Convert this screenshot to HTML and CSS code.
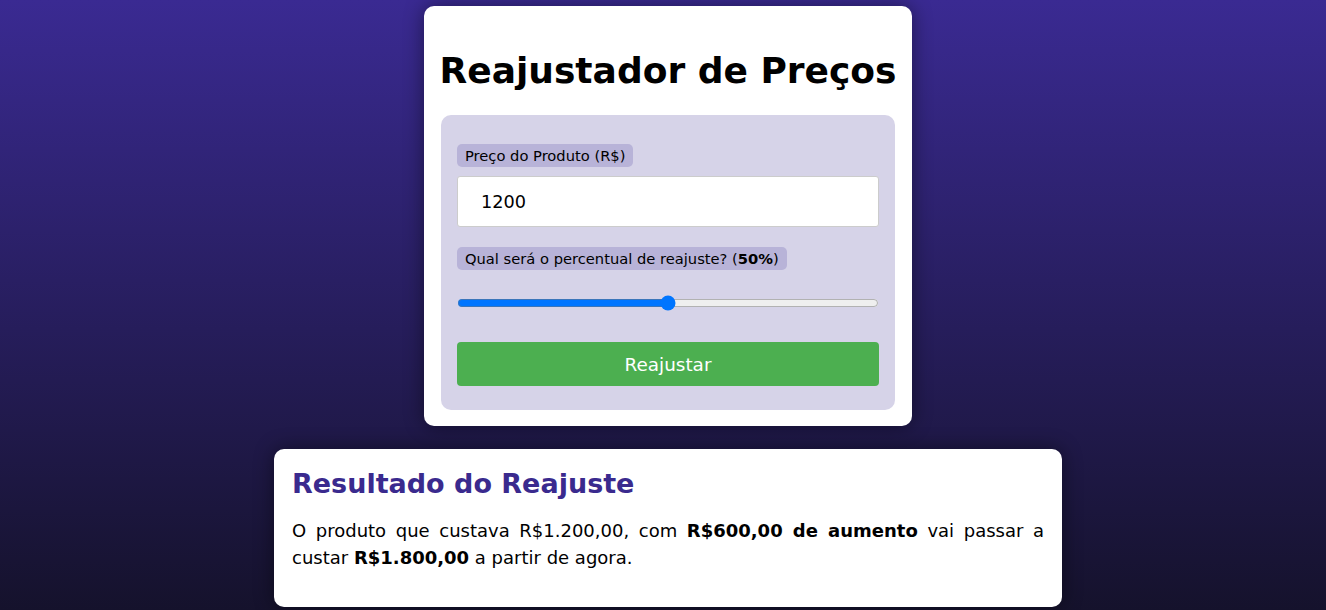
FILE: index.html
```html
<!DOCTYPE html>
<html lang="pt-BR">
<head>
<meta charset="utf-8">
<title>Reajustador de Preços</title>
<link rel="stylesheet" href="styles.css">
</head>
<body>
<main class="page">
  <section class="card">
    <h1 class="title">Reajustador de Preços</h1>
    <form class="panel">
      <label class="tag" for="preco">Preço do Produto (R$)</label>
      <input class="field" id="preco" type="text" value="1200">
      <label class="tag tag-second" for="perc">Qual será o percentual de reajuste? (<b>50%</b>)</label>
      <input class="range" id="perc" type="range" min="0" max="100" value="50">
      <button class="btn" type="button">Reajustar</button>
    </form>
  </section>
  <section class="result">
    <h2 class="result-title">Resultado do Reajuste</h2>
    <p class="result-text">O produto que custava R$1.200,00, com <strong>R$600,00 de aumento</strong> vai passar a custar <strong>R$1.800,00</strong> a partir de agora.</p>
  </section>
</main>
</body>
</html>
```

FILE: styles.css
```css
html, body {
  margin: 0;
  height: 100%;
}
body {
  font-family: "DejaVu Sans", Verdana, sans-serif;
  background: linear-gradient(to bottom, #3a2a92 0%, #15122c 100%);
  color: #000;
  overflow: hidden;
}
.page {
  display: flex;
  flex-direction: column;
  align-items: center;
  padding: 6px 0 0 10px;
  gap: 23px;
}
.card {
  width: 488px;
  box-sizing: border-box;
  background: #fff;
  border-radius: 10px;
  padding: 20px 17px 16px;
  box-shadow: 0 0 20px rgba(0, 0, 0, 0.45);
}
.title {
  margin: 24px -4px 23px;
  font-size: 36px;
  line-height: 42px;
  font-weight: bold;
  text-align: center;
  white-space: nowrap;
}
.panel {
  background: #d6d3e8;
  border-radius: 10px;
  padding: 29px 16px 24px;
  display: flex;
  flex-direction: column;
  align-items: flex-start;
}
.tag {
  background: #b8b3d8;
  border-radius: 5px;
  padding: 3px 8px;
  font-size: 14.7px;
  line-height: 17px;
}
.tag b {
  font-weight: bold;
}
.tag-second {
  margin-top: 20px;
}
.field {
  margin-top: 9px;
  align-self: stretch;
  box-sizing: border-box;
  height: 51px;
  border: 1px solid #ccc;
  border-radius: 3px;
  padding: 0 23px;
  font-family: "DejaVu Sans", Verdana, sans-serif;
  font-size: 17.7px;
  color: #000;
  background: #fff;
  outline: none;
}
.range {
  align-self: stretch;
  margin: 25px 0 0;
  height: 16px;
}
.btn {
  margin-top: 31px;
  align-self: stretch;
  height: 44px;
  border: none;
  border-radius: 4px;
  background: #4caf50;
  color: #fff;
  font-family: "DejaVu Sans", Verdana, sans-serif;
  font-size: 18.4px;
}
.result {
  width: 788px;
  box-sizing: border-box;
  background: #fff;
  border-radius: 10px;
  padding: 18px 18px 19px;
  box-shadow: 0 0 20px rgba(0, 0, 0, 0.45);
}
.result-title {
  margin: 0;
  font-size: 27px;
  line-height: 33px;
  font-weight: bold;
  color: #3a2a8e;
}
.result-text {
  margin: 17px 0 17px;
  font-size: 18px;
  line-height: 27px;
  text-align: justify;
}
```
